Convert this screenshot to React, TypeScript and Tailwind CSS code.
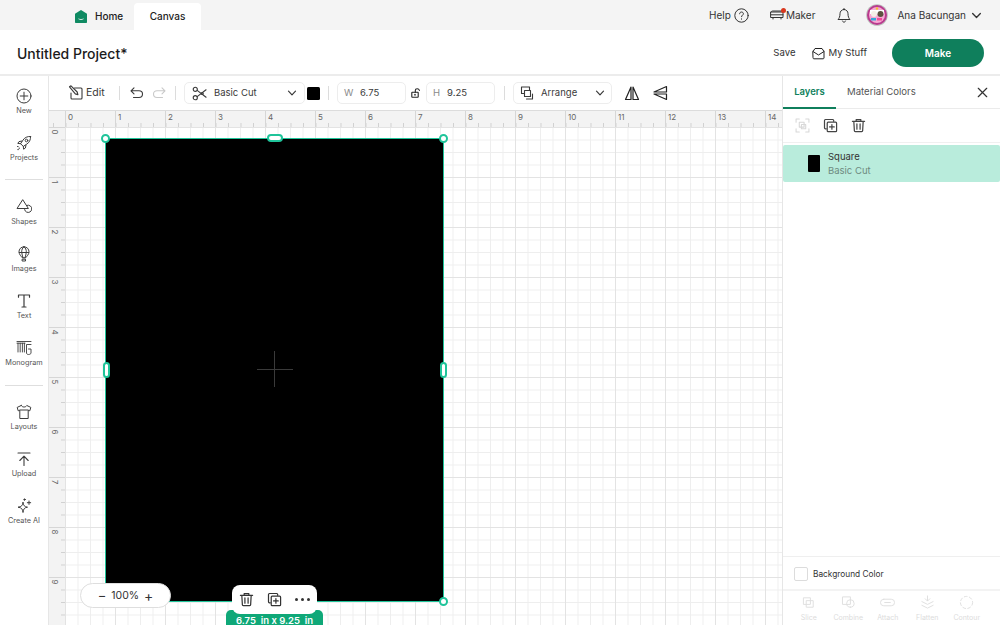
import React from "react";

const F = "[font-family:Inter,'Noto_Sans',sans-serif]";

type P = { className?: string; children?: React.ReactNode; vb?: string; sw?: number };
const I = ({ className = "w-5 h-5", children, vb = "0 0 20 20", sw = 1.3 }: P) => (
  <svg viewBox={vb} className={className + " shrink-0"} fill="none" stroke="currentColor" strokeWidth={sw} strokeLinecap="round" strokeLinejoin="round">
    {children}
  </svg>
);

const Trash = ({ className = "w-[16px] h-[16px]" }: { className?: string }) => (
  <I className={className} vb="0 0 16 16" sw={1.3}>
    <path d="M1.500 3.500h13M5.500 3.500V1.800h5v1.700M3 3.500l.6 10.200c0 .6.500.9 1 .9h6.800c.5 0 1-.3 1-.9L13 3.500M6.300 6.300v5.600M9.700 6.300v5.600" />
  </I>
);
const Dup = ({ className = "w-[16px] h-[16px]" }: { className?: string }) => (
  <I className={className} vb="0 0 16 16" sw={1.3}>
    <path d="M3.500 11.500H2.600c-.6 0-1-.4-1-1V2.600c0-.6.400-1 1-1h7.800c.6 0 1 .4 1 1v.9" />
    <rect x="4.500" y="4.500" width="10" height="10" rx="1" />
    <path d="M9.500 7v5M7 9.500h5" />
  </I>
);

const navTop = [
  {
    label: "New",
    icon: (
      <I className="w-[16px] h-[16px]" vb="0 0 16 16" sw={1}>
        <circle cx="8" cy="8" r="7" />
        <path d="M8 4.200v7.600M4.200 8h7.600" />
      </I>
    ),
  },
  {
    label: "Projects",
    icon: (
      <I className="w-[16px] h-[16px]" vb="0 0 16 16" sw={1}>
        <path d="M14.500 1.500c-3-.3-6 1-7.800 4L4.600 8.700l2.700 2.700 3.200-2.100c3-1.800 4.300-4.800 4-7.800zM6 6l-3 .6-1.200 1.800 2.800.3M10 10l-.6 3-1.800 1.200-.3-2.800" />
        <circle cx="10.500" cy="5.500" r="1.300" />
        <path d="M1.500 11.500h.6M3 13.200h.6M1.800 14.600h.6" />
      </I>
    ),
  },
];
const navMid = [
  {
    label: "Shapes",
    icon: (
      <I className="w-[16px] h-[16px]" vb="0 0 16 16" sw={1}>
        <path d="M6.500 1 1 9.500h11z" />
        <path d="M8.600 9.500a3 3 0 0 0 0 .8 3.600 3.600 0 1 0 5.800-3.300 3.600 3.600 0 0 0-3.900-.5" />
      </I>
    ),
  },
  {
    label: "Images",
    icon: (
      <I className="w-[16px] h-[16px]" vb="0 0 16 16" sw={1}>
        <path d="M8 .8C4.800.8 3 3.200 3 5.800c0 2.600 2.400 4.800 3.400 6h3.200c1-1.200 3.400-3.400 3.400-6C13 3.200 11.200.8 8 .8z" />
        <path d="M8 .8C6.300 2 5.700 3.800 5.700 5.800S6.500 10 7 11.800M8 .8c1.700 1.200 2.300 3 2.300 5S9.500 10 9 11.800M3.200 6.500h9.600M6.500 15h3v-1.800h-3z" />
      </I>
    ),
  },
  {
    label: "Text",
    icon: (
      <I className="w-[16px] h-[16px]" vb="0 0 16 16" sw={1.2}>
        <path d="M2.500 4.200V2h11v2.200M8 2v12M6 14h4" />
      </I>
    ),
  },
  {
    label: "Monogram",
    icon: (
      <I className="w-[16px] h-[16px]" vb="0 0 16 16" sw={0.9}>
        <path d="M1 1.500h14M1 3.200h8M2 3.200V12M4.200 3.200V12M6.400 3.200V12M8.400 3.200V12M15 4.500h-4.500V13c0 1 1 1.500 2 1.500s2.500-.5 2.500-1.500V9h-2.500" />
      </I>
    ),
  },
];
const navBot = [
  {
    label: "Layouts",
    icon: (
      <I className="w-[16px] h-[16px]" vb="0 0 16 16" sw={1}>
        <path d="M5.200 1.500 1.200 3.400l1 3.400 1.600-.5v8.200h8.400V6.300l1.600.5 1-3.400-4-1.900c-.6 1-1.600 1.500-2.800 1.500S5.800 2.500 5.200 1.500z" />
        <path d="M4 6h8" />
      </I>
    ),
  },
  {
    label: "Upload",
    icon: (
      <I className="w-[16px] h-[16px]" vb="0 0 16 16" sw={1.1}>
        <path d="M2 2h12M8 14.500v-9M3.800 9.500 8 5.200l4.200 4.300" />
      </I>
    ),
  },
  {
    label: "Create AI",
    icon: (
      <I className="w-[16px] h-[16px]" vb="0 0 16 16" sw={1}>
        <path d="M7 4.500c.3 3 1.500 4.300 4.500 4.700-3 .4-4.200 1.700-4.500 5.300-.3-3.600-1.500-4.900-5-5.300 3.500-.4 4.700-1.700 5-4.700z" />
        <circle cx="8.500" cy="1.600" r=".7" fill="currentColor" />
        <path d="M13 3v3.400M11.300 4.700h3.400" />
      </I>
    ),
  },
];

const NavItem = ({ label, icon }: { label: string; icon: React.ReactNode }) => (
  <div className="h-[47px] flex flex-col items-center pt-[12px] gap-[1.500px] text-[#3c3c3c]">
    {icon}
    <span className="text-[7.300px] leading-[9px] text-[#555]">{label}</span>
  </div>
);

const Sep = () => <div className="w-px h-[14px] bg-[#dcdcdc] shrink-0" />;
const Chevron = ({ className = "w-[10px] h-[10px]" }: { className?: string }) => (
  <I className={className} vb="0 0 10 10" sw={1.2}>
    <path d="M1.500 3.200 5 6.800l3.500-3.600" />
  </I>
);

const Toolbar = () => (
  <div className="h-[34px] flex items-center pl-[19px] text-[#3a3a3a] bg-white shrink-0">
    <div className="flex items-center gap-[2px] w-[51px]">
      <I className="w-[16px] h-[16px]" vb="0 0 16 16" sw={1.1}>
        <path d="M6.500 3H13c.6 0 1 .4 1 1v9c0 .6-.4 1-1 1H4c-.6 0-1-.4-1-1V8" />
        <path d="M1.500 1.800 3 .8l6.200 6.200.7 2.600-2.600-.7z" />
      </I>
      <span className="text-[10.500px]">Edit</span>
    </div>
    <Sep />
    <div className="flex items-center ml-[10px] gap-[8px] mr-[9px]">
      <I className="w-[14px] h-[14px]" vb="0 0 14 14" sw={1.1}>
        <path d="M4 1.800 1 4.800l3 3M1.200 4.800H9c2 0 3.500 1.300 3.500 3.200S11 11.500 9 11.500H3.500" />
      </I>
      <I className="w-[14px] h-[14px] text-[#c9c9c9]" vb="0 0 14 14" sw={1.1}>
        <path d="M10 1.800l3 3-3 3M12.800 4.800H5c-2 0-3.500 1.300-3.500 3.200S3 11.500 5 11.500h5.500" />
      </I>
    </div>
    <Sep />
    <div className="ml-[8px] w-[121px] h-[22px] border border-[#ededed] rounded-[5px] flex items-center px-[7px] shrink-0">
      <I className="w-[15px] h-[15px]" vb="0 0 16 16" sw={1.2}>
        <circle cx="3.500" cy="3.500" r="2.200" />
        <circle cx="3.500" cy="12.500" r="2.200" />
        <circle cx="11" cy="8" r="1" />
        <path d="M5.500 4.700 15 12M5.500 11.300 15 4" />
      </I>
      <span className="ml-[7px] mt-[1px] flex-1 text-[9.500px]">Basic Cut</span>
      <Chevron />
    </div>
    <div className="ml-[2px] w-[13px] h-[13px] bg-black rounded-[1.500px] shrink-0" />
    <div className="ml-[8px]"><Sep /></div>
    <div className="ml-[8px] w-[69px] h-[22px] border border-[#ededed] rounded-[5px] flex items-center pl-[6px] pt-[1px] shrink-0">
      <span className="text-[#8a8a8a] w-[16px] text-[9.500px]">W</span>
      <span className="text-[9.500px]">6.75</span>
    </div>
    <div className="w-[20px] flex justify-center shrink-0">
      <I className="w-[10px] h-[10px] text-[#222]" vb="0 0 10 10" sw={1.1}>
        <rect x=".8" y="4.200" width="6.400" height="5" rx=".5" />
        <path d="M4.300 4.200V2.500C4.300 1.400 5.100.8 6.200.8s1.900.6 2.200 1.600" />
        <path d="M4 6.200v1" />
      </I>
    </div>
    <div className="w-[69px] h-[22px] border border-[#ededed] rounded-[5px] flex items-center pl-[6px] pt-[1px] shrink-0">
      <span className="text-[#8a8a8a] w-[14px] text-[9.500px]">H</span>
      <span className="text-[9.500px]">9.25</span>
    </div>
    <div className="ml-[9px]"><Sep /></div>
    <div className="ml-[8px] w-[99px] h-[22px] border border-[#ededed] rounded-[5px] flex items-center px-[6px] shrink-0">
      <I className="w-[14px] h-[14px]" vb="0 0 14 14" sw={1.1}>
        <path d="M3 1H1.500v6.500H4M3 1h6.500v3" />
        <rect x="4.500" y="4.500" width="6" height="6" />
        <path d="M12.500 8v5h-6" />
      </I>
      <span className="ml-[7px] mt-[1px] flex-1 text-[9.500px]">Arrange</span>
      <Chevron />
    </div>
    <I className="ml-[12px] w-[16px] h-[16px] text-[#222]" vb="0 0 16 16" sw={1.2}>
      <path d="M7 2 1.500 14.500H7zM9 2l5.500 12.500H9z" />
    </I>
    <I className="ml-[12px] w-[16px] h-[16px] text-[#222]" vb="0 0 16 16" sw={1.2}>
      <path d="M14.500 1.500 2 7h12.500zM14.500 14.500 2 9h12.500z" />
    </I>
  </div>
);

const Handle = ({ className }: { className: string }) => (
  <div className={`absolute bg-white border-2 border-[#1fc49a] ${className}`} />
);

const Canvas = () => (
  <div className="flex-1 flex flex-col min-h-0 relative overflow-hidden">
    <div className="h-[17px] shrink-0 flex bg-[#f3f3f3] border-t border-[#dcdcdc] pl-[16px] bg-[linear-gradient(to_right,#d0d0d0_1px,transparent_1px)] bg-[size:12.500px_4px] bg-[position:16.500px_bottom] bg-repeat-x">
      {Array.from({ length: 15 }, (_, i) => (
        <div key={i} className="w-[50px] h-full shrink-0 border-l border-[#d6d6d6] pl-[2px] text-[8px] leading-[12px] text-[#666]">
          {i}
        </div>
      ))}
    </div>
    <div className="flex-1 flex min-h-0">
      <div className="w-[16px] shrink-0 bg-[#f3f3f3] overflow-hidden flex flex-col bg-[linear-gradient(to_bottom,#d0d0d0_1px,transparent_1px)] bg-[size:4px_12.500px] bg-[position:right_top] bg-repeat-y">
        {Array.from({ length: 10 }, (_, i) => (
          <div key={i} className="h-[50px] shrink-0 border-t border-[#d6d6d6] text-[8px] leading-[8px] text-[#666] flex justify-start pl-[2px]">
            <span className="rotate-90 block w-[8px] h-[8px] text-center">{i}</span>
          </div>
        ))}
      </div>
      <div className="flex-1 relative bg-white bg-[linear-gradient(to_right,#e3e3e3_1px,transparent_1px),linear-gradient(to_bottom,#e3e3e3_1px,transparent_1px),linear-gradient(to_right,#eeeeee_1px,transparent_1px),linear-gradient(to_bottom,#eeeeee_1px,transparent_1px)] bg-[size:50px_50px,50px_50px,12.500px_12.500px,12.500px_12.500px]">
        <div className="absolute left-[40px] top-[11px] w-[339px] h-[464px] bg-black border border-[#1fc49a]">
          <div className="absolute left-[151px] top-[230px] w-[36px] h-px bg-[#3a3a3a]" />
          <div className="absolute left-[168px] top-[212px] w-px h-[36px] bg-[#3a3a3a]" />
        </div>
        <Handle className="left-[36px] top-[7px] w-[9px] h-[9px] rounded-full" />
        <Handle className="left-[374px] top-[7px] w-[9px] h-[9px] rounded-full" />
        <Handle className="left-[374px] top-[470px] w-[9px] h-[9px] rounded-full" />
        <Handle className="left-[202px] top-[7px] w-[16px] h-[8px] rounded-[4px]" />
        <Handle className="left-[38px] top-[235px] w-[7px] h-[16px] rounded-[4px]" />
        <Handle className="left-[375px] top-[235px] w-[7px] h-[16px] rounded-[4px]" />

        <div className="absolute left-[15px] top-[456px] w-[91px] h-[25px] bg-white rounded-full border border-[#dedede] flex items-center justify-center gap-[5px] text-[10.500px] text-[#333]">
          <span className="text-[13px] leading-none">−</span>
          <span>100%</span>
          <span className="text-[14px] leading-none">+</span>
        </div>

        <div className="absolute left-[161px] top-[483px] w-[97px] h-[16px] bg-[#0fa878] rounded-t-[5px] flex justify-center text-white text-[9.500px] font-semibold pt-[5px] leading-[12px] whitespace-pre">
          6.75  in x 9.25  in
        </div>
        <div className="absolute left-[167px] top-[458px] w-[85px] h-[29px] bg-white rounded-[8px] flex items-center pl-[7px] text-[#333]">
          <Trash className="w-[15px] h-[15px]" />
          <Dup className="ml-[13px] w-[15px] h-[15px]" />
          <div className="ml-[13px] flex gap-[3px]">
            <div className="w-[3px] h-[3px] rounded-full bg-[#333]" />
            <div className="w-[3px] h-[3px] rounded-full bg-[#333]" />
            <div className="w-[3px] h-[3px] rounded-full bg-[#333]" />
          </div>
        </div>
      </div>
    </div>
  </div>
);

const tools = [
  { label: "Slice", d: <path d="M3 3h7v7H3zM6 6h7v7H6z" /> },
  { label: "Combine", d: <path d="M2 2h8v8H2zM10 13a4 4 0 1 0 0-8 4 4 0 0 0 0 8z" /> },
  { label: "Attach", d: <path d="M4 4.500h8a3.500 3.500 0 0 1 0 7H4a3.500 3.500 0 0 1 0-7zM5 8h6" /> },
  { label: "Flatten", d: <path d="M8 1v5M5.500 4 8 6.500 10.500 4M2 7l6 3 6-3M2 11l6 3 6-3" /> },
  { label: "Contour", d: <circle cx="8" cy="8" r="6.500" strokeDasharray="3 2.500" /> },
];

const Panel = () => (
  <div className="w-[218px] shrink-0 border-l border-[#e6e6e6] flex flex-col bg-white">
    <div className="h-[33px] flex items-stretch border-b border-[#ebebeb] shrink-0 relative">
      <div className="w-[53px] flex items-center justify-center pt-[1px] text-[9.500px] font-semibold text-[#0f7f5c] border-b-2 border-[#0f7f5c] h-[33px]">Layers</div>
      <div className="ml-[11px] flex items-center text-[9.600px] text-[#555]">Material Colors</div>
      <I className="absolute right-[12px] top-[11px] w-[11px] h-[11px] text-[#333]" vb="0 0 13 13" sw={1.4}>
        <path d="M1.500 1.500l10 10M11.500 1.500l-10 10" />
      </I>
    </div>
    <div className="h-[34px] flex items-center pl-[12px] gap-[13px] border-b border-[#f0f0f0] shrink-0 text-[#444]">
      <I className="w-[15px] h-[15px] text-[#d8d8d8]" vb="0 0 14 14" sw={1}>
        <path d="M1 4V1h3M10 1h3v3M13 10v3h-3M4 13H1v-3" />
        <rect x="4" y="4" width="4.500" height="4.500" />
        <rect x="6" y="6" width="4" height="4" />
      </I>
      <Dup className="w-[15px] h-[15px]" />
      <Trash className="w-[15px] h-[15px]" />
    </div>
    <div className="mt-[2px] h-[37px] bg-[#b9ecdc] rounded-[2px] flex items-center pl-[25px] shrink-0">
      <div className="w-[12px] h-[17px] bg-black rounded-[1px]" />
      <div className="ml-[8px]">
        <div className="text-[9.500px] leading-[14px] text-[#333]">Square</div>
        <div className="text-[9.500px] leading-[14px] text-[#6e8a80]">Basic Cut</div>
      </div>
    </div>
    <div className="flex-1" />
    <div className="h-[33px] border-t border-[#efefef] flex items-center pl-[11px] pt-[2px] gap-[5px] shrink-0">
      <div className="w-[14px] h-[14px] border border-[#dcdcdc] rounded-[2px]" />
      <span className="text-[8.300px] text-[#333]">Background Color</span>
    </div>
    <div className="h-[36px] border-t-2 border-[#f3f3f3] flex items-start pt-[4px] pl-[6px] shrink-0">
      {tools.map((t) => (
        <div key={t.label} className="w-[39.500px] flex flex-col items-center text-[#dedede]">
          <I className="w-[15px] h-[15px]" vb="0 0 16 16" sw={1}>{t.d}</I>
          <span className="text-[7px] leading-[9px] mt-[3px] text-[#dcdcdc]">{t.label}</span>
        </div>
      ))}
    </div>
  </div>
);

export default function App() {
  return (
    <div className={`w-[1000px] h-[625px] overflow-hidden flex flex-col bg-white ${F} text-[#222]`}>
      <div className="h-[30px] bg-[#f4f4f4] flex items-end shrink-0 relative">
        <div className="ml-[75px] h-[27px] w-[59px] flex items-center gap-[8px]">
          <svg viewBox="0 0 12 13" className="w-[12px] h-[13px] shrink-0 mb-[1px]">
            <path d="M6 0 12 3.800V12c0 .6-.4 1-1 1H1c-.6 0-1-.4-1-1V3.800z" fill="#0f8a62" />
            <path d="M3.500 8.800c1.500 1 3.500 1 5 0" stroke="#fff" strokeWidth=".8" fill="none" />
          </svg>
          <span className="text-[10px] font-medium">Home</span>
        </div>
        <div className="h-[27px] w-[67px] bg-white rounded-t-[4px] flex items-center justify-center text-[10px] font-medium">Canvas</div>
        <div className="flex-1" />
        <div className="h-[30px] flex items-center text-[10px] text-[#333] pr-[18px]">
          <span>Help</span>
          <I className="ml-[3px] w-[15px] h-[15px]" vb="0 0 15 15" sw={1}>
            <circle cx="7.500" cy="7.500" r="6.700" />
            <path d="M5.600 5.800c0-1.100.9-1.800 1.900-1.800s1.900.7 1.900 1.700c0 1.400-1.900 1.500-1.900 3M7.500 10.800v.4" />
          </I>
          <div className="ml-[21px] relative">
            <I className="w-[14px] h-[10px]" vb="0 0 14 10" sw={1}>
              <path d="M1 2h12v5.500H1zM1 2c.3-.7.8-1 1.500-1h9c.7 0 1.200.3 1.500 1M3 7.500V9M11 7.500V9M1 4.800h12" />
            </I>
            <div className="absolute -top-[2px] right-[-2px] w-[5px] h-[5px] rounded-full bg-[#d9381e]" />
          </div>
          <span className="ml-[2px]">Maker</span>
          <I className="ml-[22px] w-[14px] h-[15px]" vb="0 0 14 15" sw={1}>
            <path d="M7 1.500c-2.500 0-4 2-4 4.200 0 3-.8 4.500-2 5.800h12c-1.200-1.300-2-2.800-2-5.800 0-2.200-1.500-4.200-4-4.200zM7 .5v1M5.500 13c.3.700.8 1.200 1.500 1.200s1.200-.5 1.500-1.200" />
          </I>
          <svg viewBox="0 0 22 22" className="ml-[15px] w-[22px] h-[22px] shrink-0">
            <circle cx="11" cy="11" r="10.800" fill="#bdbdbd" />
            <circle cx="11" cy="11" r="10" fill="#b93a8e" />
            <circle cx="11" cy="11" r="8" fill="#f7a8d4" />
            <path d="M4 6h14v4H4z" fill="#fff" />
            <circle cx="14.500" cy="10" r="3" fill="#5d5240" />
            <circle cx="8" cy="10" r="3" fill="#f5f0e8" />
            <path d="M5 14h5v2.500H5z" fill="#39a7d8" />
            <path d="M11 14h5v2.500h-5z" fill="#ee4f9a" />
            <circle cx="11" cy="4.500" r="1.200" fill="#f2c230" />
          </svg>
          <span className="ml-[9px]">Ana Bacungan</span>
          <Chevron className="ml-[5px] w-[11px] h-[11px]" />
        </div>
      </div>
      <div className="h-[46px] border-b-2 border-[#ececec] flex items-center shrink-0 pl-[17px] pr-[16px] pt-[2px] bg-white">
        <span className="text-[14px] font-medium text-[#1c1c1c]">Untitled Project*</span>
        <div className="flex-1" />
        <span className="mt-[1px] text-[9.600px] text-[#333]">Save</span>
        <I className="ml-[16px] w-[13px] h-[13px]" vb="0 0 13 13" sw={1}>
          <path d="M1 4.500 3 1.500h7l2 3V11c0 .4-.4.800-.8.800H1.800C1.400 11.800 1 11.400 1 11zM1 4.500l5.500 3.500L12 4.500" />
        </I>
        <span className="ml-[4px] mt-[1px] text-[9.600px] text-[#333]">My Stuff</span>
        <div className="ml-[25px] w-[92px] h-[28px] rounded-full bg-[#0f7f5c] text-white flex items-center justify-center text-[10px] font-semibold">Make</div>
      </div>
      <div className="flex-1 flex min-h-0">
        <div className="w-[49px] shrink-0 border-r border-[#e6e6e6] flex flex-col items-stretch bg-white">
          {navTop.map((n) => <NavItem key={n.label} {...n} />)}
          <div className="mx-[5px] mt-[9px] mb-[7px] border-t border-[#dedede]" />
          {navMid.map((n) => <NavItem key={n.label} {...n} />)}
          <div className="mx-[5px] mt-[10px] mb-[6px] border-t border-[#dedede]" />
          {navBot.map((n) => <NavItem key={n.label} {...n} />)}
        </div>
        <div className="flex-1 flex flex-col min-w-0">
          <Toolbar />
          <Canvas />
        </div>
        <Panel />
      </div>
    </div>
  );
}
